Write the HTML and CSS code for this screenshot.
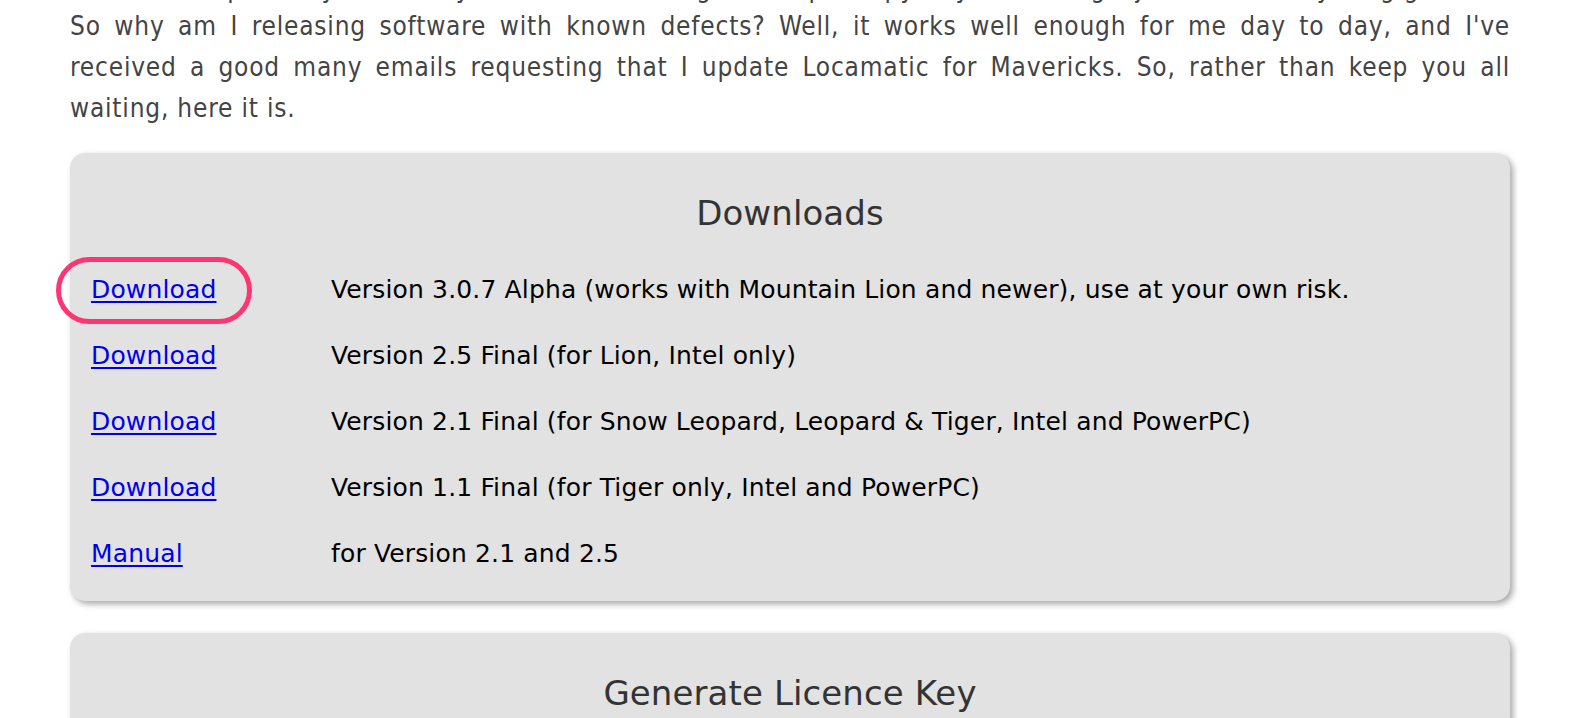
FILE: index.html
```html
<!DOCTYPE html>
<html lang="en">
<head>
<meta charset="utf-8">
<title>Locamatic Downloads</title>
<link rel="stylesheet" href="styles.css">
</head>
<body>
<main class="content">
  <p class="intro intro-prev">and there is probably a memory leak or two lurking, so keep a copy of your settings, just in case anything goes wrong.</p>
  <p class="intro">So why am I releasing software with known defects? Well, it works well enough for me day to day, and I've received a good many emails requesting that I update Locamatic for Mavericks. So, rather than keep you all waiting, here it is.</p>

  <section class="card">
    <h2 class="card-title">Downloads</h2>
    <div class="dl-list">
      <div class="dl-link"><a href="#">Download</a><span class="highlight"></span></div>
      <div class="dl-desc">Version 3.0.7 Alpha (works with Mountain Lion and newer), use at your own risk.</div>
      <div class="dl-link"><a href="#">Download</a></div>
      <div class="dl-desc">Version 2.5 Final (for Lion, Intel only)</div>
      <div class="dl-link"><a href="#">Download</a></div>
      <div class="dl-desc">Version 2.1 Final (for Snow Leopard, Leopard &amp; Tiger, Intel and PowerPC)</div>
      <div class="dl-link"><a href="#">Download</a></div>
      <div class="dl-desc">Version 1.1 Final (for Tiger only, Intel and PowerPC)</div>
      <div class="dl-link"><a href="#">Manual</a></div>
      <div class="dl-desc">for Version 2.1 and 2.5</div>
    </div>
  </section>

  <section class="card">
    <h2 class="card-title">Generate Licence Key</h2>
  </section>
</main>
</body>
</html>
```

FILE: styles.css
```css
html, body {
  margin: 0;
  padding: 0;
  background: #ffffff;
}

body {
  overflow: hidden;
}

.content {
  width: 1440px;
  margin-left: 70px;
}

.intro {
  margin: 0 0 24px 0;
  font-family: "DejaVu Sans Condensed", "DejaVu Sans", sans-serif;
  font-size: 26px;
  line-height: 41px;
  letter-spacing: 0.8px;
  color: #444444;
  text-align: justify;
}

.intro-prev {
  margin: -32px 0 -3px 0;
  white-space: nowrap;
  overflow: hidden;
  text-align-last: justify;
}

.card {
  background: #e2e2e2;
  border-radius: 15px;
  box-shadow: 3px 3px 6px rgba(0, 0, 0, 0.35);
  padding: 35px 20px 14px 20px;
  margin-bottom: 32px;
  font-family: "DejaVu Sans", sans-serif;
}

.card-title {
  margin: 0;
  font-size: 34px;
  line-height: 50px;
  font-weight: normal;
  letter-spacing: 0.1px;
  color: #333333;
  text-align: center;
}

.dl-list {
  display: grid;
  grid-template-columns: 240px 1fr;
  grid-auto-rows: 66px;
  margin-top: 19px;
  padding-left: 1px;
  font-size: 25px;
  line-height: 66px;
  letter-spacing: 0.15px;
  color: #000000;
}

.dl-link {
  position: relative;
}

.dl-link a {
  color: #0000ee;
  text-decoration: underline;
  text-decoration-thickness: 2px;
  text-underline-offset: 3px;
}

.highlight {
  position: absolute;
  left: -35px;
  top: 0;
  width: 196px;
  height: 67px;
  box-sizing: border-box;
  border: 5px solid #fd3572;
  border-radius: 34px;
}
```
